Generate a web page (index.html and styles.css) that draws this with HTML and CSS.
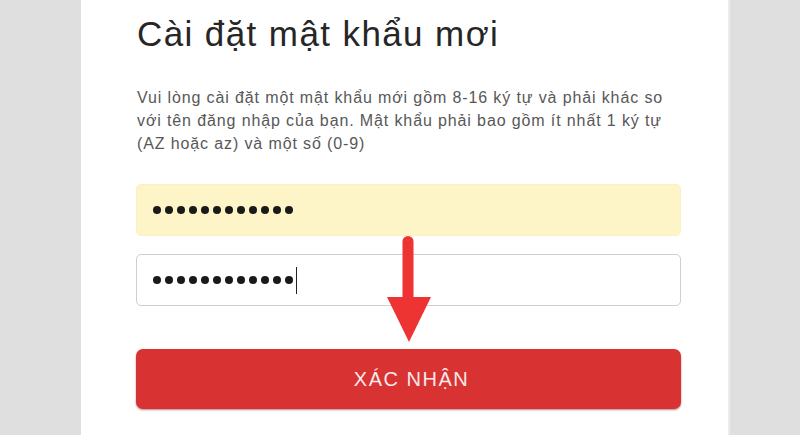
FILE: index.html
```html
<!DOCTYPE html>
<html lang="vi">
<head>
<meta charset="utf-8">
<link rel="stylesheet" href="styles.css">
</head>
<body>
<div class="page">
  <div class="side left"></div>
  <main class="panel">
    <h1 class="title">Cài đặt mật khẩu mơi</h1>
    <p class="desc">Vui lòng cài đặt một mật khẩu mới gồm 8-16 ký tự và phải khác so<br>với tên đăng nhập của bạn. Mật khẩu phải bao gồm ít nhất 1 ký tự<br>(AZ hoặc az) và một số (0-9)</p>
    <div class="field filled">
      <div class="dots"><i></i><i></i><i></i><i></i><i></i><i></i><i></i><i></i><i></i><i></i><i></i><i></i></div>
    </div>
    <div class="field">
      <div class="dots"><i></i><i></i><i></i><i></i><i></i><i></i><i></i><i></i><i></i><i></i><i></i><i></i><span class="caret"></span></div>
    </div>
    <button class="btn">XÁC NHẬN</button>
    <svg class="arrow" width="52" height="115" viewBox="0 0 52 115">
      <rect x="20.5" y="5" width="11" height="66" rx="5.5" fill="#ee3333"/>
      <path d="M5 66 H49 L27 111 Z" fill="#ee3333"/>
    </svg>
  </main>
  <div class="side right"></div>
</div>
</body>
</html>
```
FILE: styles.css
```css
html, body {
  margin: 0;
  padding: 0;
  background: #ffffff;
}
.page {
  display: flex;
  width: 800px;
  height: 435px;
  overflow: hidden;
}
.side {
  background: #e0dfe0;
}
.side.left {
  width: 81px;
}
.side.right {
  flex: 1;
  border-left: 2px solid #ececec;
}
.panel {
  position: relative;
  width: 647px;
  background: #ffffff;
  padding: 0 0 0 55px;
  box-sizing: border-box;
  font-family: "Liberation Sans", Arial, sans-serif;
}
.title {
  margin: 12px 0 0 1px;
  font-size: 35px;
  font-weight: normal;
  color: #262626;
  line-height: 44px;
  letter-spacing: 1.4px;
}
.desc {
  margin: 30px 0 0 1px;
  width: 580px;
  white-space: nowrap;
  font-size: 16px;
  line-height: 23px;
  letter-spacing: 0.88px;
  color: #585858;
}
.field {
  margin-top: 18px;
  width: 545px;
  height: 52px;
  box-sizing: border-box;
  border: 1px solid #cfcfcf;
  border-radius: 5px;
  display: flex;
  align-items: center;
  padding-left: 16px;
  background: #ffffff;
}
.field.filled {
  margin-top: 29px;
  background: #fdf4c8;
  border-color: #fbf0c4;
}
.dots {
  display: flex;
  align-items: center;
  gap: 3.6px;
}
.dots i {
  display: block;
  width: 8.4px;
  height: 8.4px;
  border-radius: 50%;
  background: #1a1a1a;
}
.caret {
  display: block;
  width: 1.5px;
  height: 27px;
  background: #222;
  margin-left: -1px;
}
.btn {
  margin-top: 43px;
  width: 545px;
  height: 60px;
  border: none;
  border-radius: 7px;
  background: #d93232;
  box-shadow: 0 1px 2px rgba(120, 20, 20, 0.5);
  color: #f7eaea;
  font-family: "Liberation Sans", Arial, sans-serif;
  font-size: 20px;
  letter-spacing: 1.5px;
  padding: 0 0 0 6px;
}
.arrow {
  position: absolute;
  left: 301px;
  top: 231px;
}
```
